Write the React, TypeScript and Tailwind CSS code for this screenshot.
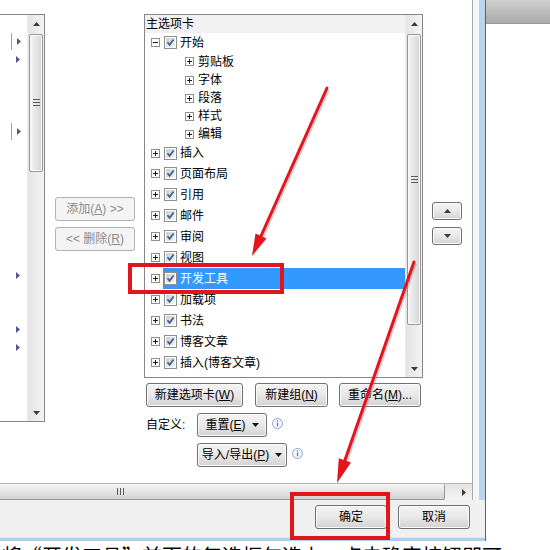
import React from 'react';

const font = "font-['Liberation_Sans','Noto_Sans_CJK_SC',sans-serif]";

const btn =
  'border border-[#707070] rounded-[3px] bg-linear-to-b from-[#f4f4f4] via-[#e8e8e8] to-[#d2d2d2] shadow-[inset_0_0_0_1px_#fbfbfb] text-[12px] leading-none whitespace-nowrap text-black flex items-center justify-center';

const btnOff =
  'border border-[#adb2b5] rounded-[3px] bg-[#f4f4f4] text-[12px] leading-none whitespace-nowrap text-[#8b8b8b] flex items-center justify-center';

const tree = [
  { label: '开始', level: 0, open: true, h: 'h-[19px]' },
  { label: '剪贴板', level: 1, h: 'h-[19px]' },
  { label: '字体', level: 1, h: 'h-[18px]' },
  { label: '段落', level: 1, h: 'h-[18px]' },
  { label: '样式', level: 1, h: 'h-[18px]' },
  { label: '编辑', level: 1, h: 'h-[18px]' },
  { label: '插入', level: 0, h: 'h-[20px]' },
  { label: '页面布局', level: 0, h: 'h-[21px]' },
  { label: '引用', level: 0, h: 'h-[21px]' },
  { label: '邮件', level: 0, h: 'h-[21px]' },
  { label: '审阅', level: 0, h: 'h-[21px]' },
  { label: '视图', level: 0, h: 'h-[21px]' },
  { label: '开发工具', level: 0, h: 'h-[21px]', selected: true },
  { label: '加载项', level: 0, h: 'h-[21px]' },
  { label: '书法', level: 0, h: 'h-[21px]' },
  { label: '博客文章', level: 0, h: 'h-[21px]' },
  { label: '插入(博客文章)', level: 0, h: 'h-[21px]' },
  { label: '大纲', level: 0, h: 'h-[21px]' },
];

// left list: 18px rows, marker = triangle, line = little bar on the left
const leftRows = [
  { tri: true, line: true },
  { tri: true },
  {},
  {},
  {},
  { tri: true, line: true },
  {}, {}, {}, {}, {}, {}, {},
  { tri: true },
  {}, {},
  { tri: true },
  { tri: true },
];

function Arrow({ up }: { up?: boolean }) {
  return (
    <svg width="7" height="4" viewBox="0 0 7 4">
      <path d={up ? 'M0 4 L3.5 0 L7 4 Z' : 'M0 0 L7 0 L3.5 4 Z'} fill="#3b3b3b" />
    </svg>
  );
}

function Grip({ horizontal }: { horizontal?: boolean }) {
  return horizontal ? (
    <svg width="8" height="7" viewBox="0 0 8 7">
      <path d="M0.5 0 V7 M3.5 0 V7 M6.5 0 V7" stroke="#5b5b5b" strokeWidth="1" />
    </svg>
  ) : (
    <svg width="7" height="8" viewBox="0 0 7 8">
      <path d="M0 0.5 H7 M0 3.5 H7 M0 6.5 H7" stroke="#5b5b5b" strokeWidth="1" />
    </svg>
  );
}

function VScroll({ thumb }: { thumb: string }) {
  return (
    <div className="w-[17px] h-full flex flex-col bg-linear-to-r from-[#e4e4e4] to-[#f3f3f3] border-l border-[#ececec]">
      <div className="h-[17px] flex items-center justify-center shrink-0">
        <Arrow up />
      </div>
      <div
        className={`${thumb} mt-[2px] mx-[1px] shrink-0 rounded-[2px] border border-[#969696] bg-linear-to-r from-[#f5f5f5] to-[#d5d5d5] shadow-[inset_0_0_0_1px_#fafafa] flex items-center justify-center`}
      >
        <Grip />
      </div>
      <div className="flex-1" />
      <div className="h-[17px] flex items-center justify-center shrink-0">
        <Arrow />
      </div>
    </div>
  );
}

function Expander({ open }: { open?: boolean }) {
  return (
    <svg width="9" height="9" viewBox="0 0 9 9" className="shrink-0">
      <rect x="0.5" y="0.5" width="8" height="8" fill="#fff" stroke="#8f8f8f" />
      <path d={open ? 'M2 4.5 H7' : 'M2 4.5 H7 M4.5 2 V7'} stroke="#1e1e1e" strokeWidth="1" />
    </svg>
  );
}

function Check() {
  return (
    <span className="w-[13px] h-[13px] border border-[#8e8f8f] bg-white flex items-center justify-center shrink-0">
      <span className="w-[9px] h-[9px] bg-linear-to-br from-[#c9cdd3] to-[#f7f7f7] flex items-center justify-center">
        <svg width="9" height="9" viewBox="0 0 9 9">
          <path d="M1.5 4.3 L3.6 6.8 L7.6 1.4" stroke="#3f5a91" strokeWidth="1.7" fill="none" />
        </svg>
      </span>
    </span>
  );
}

function Info() {
  return (
    <svg width="11" height="11" viewBox="0 0 11 11" className="shrink-0">
      <circle cx="5.5" cy="5.5" r="5" fill="#f3f7fc" stroke="#8aa4cc" />
      <path d="M5.5 4.6 V8.3" stroke="#5a78a8" strokeWidth="1.2" />
      <circle cx="5.5" cy="3" r="0.7" fill="#5a78a8" />
    </svg>
  );
}

function Drop() {
  return (
    <svg width="7" height="4" viewBox="0 0 7 4" className="ml-[6px]">
      <path d="M0 0 L7 0 L3.5 4 Z" fill="#111" />
    </svg>
  );
}

function TreeRow({ item }: { item: (typeof tree)[number] }) {
  if (item.level === 1) {
    return (
      <div className={`${item.h} flex items-center pl-[40px] shrink-0`}>
        <Expander />
        <span className="ml-[4px] text-[12px] text-black leading-none">{item.label}</span>
      </div>
    );
  }
  return (
    <div className={`${item.h} flex items-center shrink-0`}>
      <div className="w-[18px] pl-[6px] flex items-center shrink-0">
        <Expander open={item.open} />
      </div>
      <div
        className={`flex-1 h-full flex items-center pl-[1px] ${item.selected ? 'bg-[#3399ff] text-white' : 'text-black'}`}
      >
        <Check />
        <span className="ml-[3px] text-[12px] leading-none">{item.label}</span>
      </div>
    </div>
  );
}

export default function App() {
  return (
    <div className={`relative w-[550px] h-[550px] overflow-hidden bg-white ${font}`}>
      <div className="flex h-[541px]">
        {/* dialog */}
        <div className="w-[486px] h-full flex flex-col border-r border-[#3d6a8c]">
          <div className="h-[500px] flex">
            <div className="w-[473px] h-full flex flex-col border-r border-[#a7a7a7] bg-white">
              <div className="h-[483px] flex items-start pt-[14px]">
                {/* left list */}
                <div className="w-[45px] h-[408px] flex border-t border-b border-r border-[#828790]">
                  <div className="w-[27px] flex flex-col pt-[17px]">
                    {leftRows.map((r, i) => (
                      <div key={i} className="h-[18px] flex items-center relative shrink-0">
                        {r.line ? <div className="ml-[11px] w-px h-[17px] bg-[#9aa0ac]" /> : <div className="ml-[12px]" />}
                        {r.tri && (
                          <svg width="4" height="7" viewBox="0 0 4 7" className={r.line ? 'ml-[5px]' : 'ml-[4px]'}>
                            <path d="M0 0 L4 3.5 L0 7 Z" fill="#4b5a8c" />
                          </svg>
                        )}
                      </div>
                    ))}
                  </div>
                  <VScroll thumb="h-[138px]" />
                </div>

                {/* add / remove */}
                <div className="ml-[10px] w-[80px] mt-[183px] flex flex-col gap-[6px]">
                  <div className={`${btnOff} h-[24px]`}>
                    添加(<span className="underline">A</span>)&nbsp;&gt;&gt;
                  </div>
                  <div className={`${btnOff} h-[24px]`}>
                    &lt;&lt;&nbsp;删除(<span className="underline">R</span>)
                  </div>
                </div>

                {/* main tabs list */}
                <div className="ml-[9px] w-[279px] flex flex-col">
                  <div className="h-[364px] flex border border-[#828790] overflow-hidden">
                    <div className="w-[260px] flex flex-col overflow-hidden">
                      <div className="h-[18px] shrink-0 bg-[#f1f1f1] flex items-center pl-[1px] text-[12px] text-black leading-none">
                        主选项卡
                      </div>
                      {tree.map((t) => (
                        <TreeRow key={t.label} item={t} />
                      ))}
                    </div>
                    <VScroll thumb="h-[291px]" />
                  </div>
                  <div className="mt-[5px] flex h-[24px]">
                    <div className={`${btn} w-[97px] ml-[2px]`}>
                      新建选项卡(<span className="underline">W</span>)
                    </div>
                    <div className={`${btn} w-[73px] ml-[12px]`}>
                      新建组(<span className="underline">N</span>)
                    </div>
                    <div className={`${btn} w-[82px] ml-[11px]`}>
                      重命名(<span className="underline">M</span>)...
                    </div>
                  </div>
                  <div className="mt-[6px] flex items-center h-[24px]">
                    <span className="w-[53px] pl-[2px] text-[12px] text-black">自定义:</span>
                    <div className={`${btn} w-[70px] h-full`}>
                      重置(<span className="underline">E</span>)
                      <Drop />
                    </div>
                    <div className="ml-[5px] -mt-[3px]">
                      <Info />
                    </div>
                  </div>
                  <div className="mt-[6px] flex items-center h-[24px] pl-[53px]">
                    <div className={`${btn} w-[90px] h-full`}>
                      导入/导出(<span className="underline">P</span>)
                      <Drop />
                    </div>
                    <div className="ml-[5px] -mt-[3px]">
                      <Info />
                    </div>
                  </div>
                </div>

                {/* move up / down */}
                <div className="ml-[9px] w-[30px] mt-[188px] flex flex-col gap-[7px]">
                  <div className={`${btn} h-[18px]`}>
                    <Arrow up />
                  </div>
                  <div className={`${btn} h-[18px]`}>
                    <Arrow />
                  </div>
                </div>
              </div>

              {/* horizontal scrollbar */}
              <div className="h-[17px] flex border-t border-[#b5b5b5] bg-linear-to-b from-[#e4e4e4] to-[#f3f3f3]">
                <div className="w-[445px] h-full rounded-r-[2px] border-r border-b border-[#969696] bg-linear-to-b from-[#f5f5f5] to-[#d3d3d3] flex items-center pl-[117px]">
                  <Grip horizontal />
                </div>
                <div className="flex-1" />
                <div className="w-[17px] flex items-center justify-center">
                  <svg width="4" height="7" viewBox="0 0 4 7">
                    <path d="M0 0 L4 3.5 L0 7 Z" fill="#3b3b3b" />
                  </svg>
                </div>
              </div>
            </div>
            <div className="w-[6px] bg-[#f2f5fa]" />
            <div className="flex-1 bg-[#bcd3ec]" />
          </div>

          {/* footer */}
          <div className="h-[37px] bg-[#f0f0f0] flex pt-[5px] relative">
            <div className={`${btn} ml-[315px] w-[72px] h-[24px] border-[#3c7fb1] shadow-[inset_0_0_0_1px_#a6dcf5]`}>确定</div>
            <div className={`${btn} ml-[11px] w-[72px] h-[24px]`}>取消</div>
          </div>
          <div className="h-[4px] bg-[#a9d0ef] border-t border-[#dde8f4]" />
        </div>

        {/* window behind */}
        <div className="flex-1 flex flex-col">
          <div className="h-[24px] bg-linear-to-b from-[#d0d0d0] to-[#a9a9a9] border-b border-[#9a9a9a]" />
          <div className="flex-1 bg-white" />
        </div>
      </div>

      {/* caption, cut by the frame */}
      <div className="h-[9px] overflow-hidden">
        <div className="mt-[1px] text-[20px] leading-[28px] text-black whitespace-nowrap pl-[2px] font-['Noto_Sans_CJK_SC',sans-serif]">
          将“开发工具”前面的复选框勾选上，点击确定按钮即可。
        </div>
      </div>

      {/* annotations */}
      <div className="absolute left-[128px] top-[263px] w-[156px] h-[31px] border-[4px] border-[#e0161c]" />
      <div className="absolute left-[290px] top-[492px] w-[100px] h-[48px] border-[4px] border-[#e0161c]" />
      <svg className="absolute inset-0 pointer-events-none" width="550" height="550" viewBox="0 0 550 550">
        <g opacity="0.35" transform="translate(1.5 1.5)">
          <path d="M327 88 L261 236" stroke="#7a7a7a" strokeWidth="3" />
          <path d="M414 262 L345 460" stroke="#7a7a7a" strokeWidth="3" />
        </g>
        <path d="M327 88 L261 236" stroke="#e3141b" strokeWidth="3" strokeLinecap="round" />
        <polygon points="252,256 266.5,238.4 255.5,233.5" fill="#e3141b" />
        <path d="M414 262 L345 460" stroke="#e3141b" strokeWidth="3" strokeLinecap="round" />
        <polygon points="337,483 351,462.4 338.8,458.2" fill="#e3141b" />
      </svg>
    </div>
  );
}
